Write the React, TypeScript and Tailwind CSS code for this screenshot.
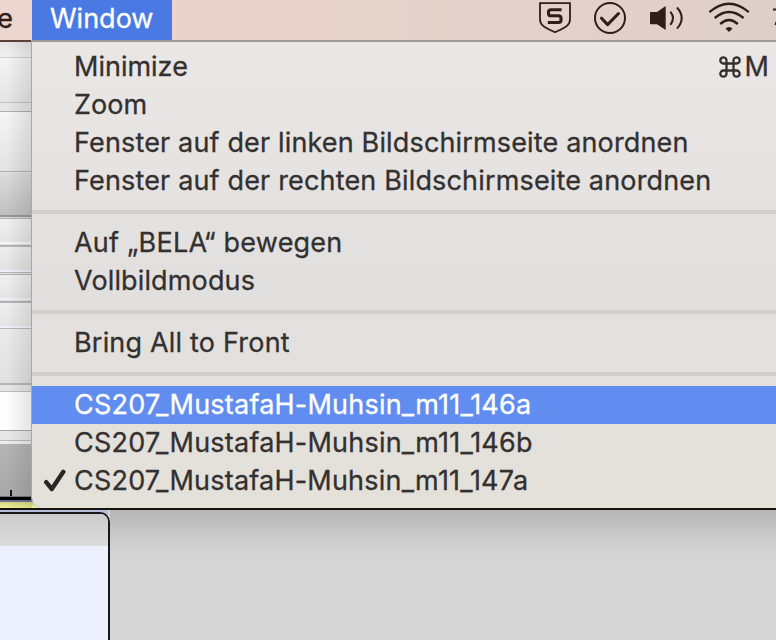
import React from "react";

const stripes: string[] = [
  "h-[15px] bg-linear-to-b from-[#e6e6e6] to-[#f1f1f1]",
  "h-px bg-[#cfcfcf]",
  "h-[44px] bg-linear-to-b from-[#f4f4f4] to-[#e4e4e4]",
  "h-px bg-[#c2c2c2]",
  "h-[8px] bg-[#e6e6e6]",
  "h-px bg-[#aeaeae]",
  "h-[59px] bg-linear-to-b from-[#f5f5f5] to-[#e2e2e2]",
  "h-px bg-[#aaaaaa]",
  "h-px bg-[#e6e6e6]",
  "h-[42px] bg-linear-to-b from-[#dcdcdc] to-[#c0c0c0]",
  "h-[2px] bg-[#969696]",
  "h-px bg-[#dddddd]",
  "h-px bg-[#b0b0b0]",
  "h-[23px] bg-linear-to-b from-[#f0f0f0] to-[#e5e5e5]",
  "h-[2px] bg-[#f8f8fa]",
  "h-px bg-[#dddddd]",
  "h-[2px] bg-[#b5b5b5]",
  "h-[23px] bg-linear-to-b from-[#ededed] to-[#e2e2e2]",
  "h-[2px] bg-[#f0f0fa]",
  "h-px bg-[#b4b4b4]",
  "h-px bg-[#e8e8e8]",
  "h-px bg-[#b0b0b0]",
  "h-[23px] bg-linear-to-b from-[#f0f0f0] to-[#e5e5e5]",
  "h-[2px] bg-[#f0f0fa]",
  "h-px bg-[#dddddd]",
  "h-[2px] bg-[#b5b5b5]",
  "h-[23px] bg-linear-to-b from-[#efefef] to-[#e5e5e5]",
  "h-[2px] bg-[#f0f0fa]",
  "h-px bg-[#b8b8b8]",
  "h-[54px] bg-linear-to-b from-[#ebebeb] to-[#e1e1e1]",
  "h-[2px] bg-[#b5b5b5]",
  "h-[6px] bg-[#e6e6e6]",
  "h-px bg-[#bdbdbd]",
  "h-[38px] bg-[#fdfdfd]",
  "h-px bg-[#a6a6a6]",
  "h-[9px] bg-[#e8e8e8]",
  "h-px bg-[#bbbbbb]",
  "h-[3px] bg-[#ededed]",
];

type Entry = { label: string; track: string; shortcut?: string; active?: boolean; checked?: boolean };

const groups: Entry[][] = [
  [
    { label: "Minimize", track: "tracking-[0px]", shortcut: "M" },
    { label: "Zoom", track: "tracking-[0.05px]" },
    { label: "Fenster auf der linken Bildschirmseite anordnen", track: "tracking-[0.15px]" },
    { label: "Fenster auf der rechten Bildschirmseite anordnen", track: "tracking-[0.16px]" },
  ],
  [
    { label: "Auf „BELA“ bewegen", track: "tracking-[0.21px]" },
    { label: "Vollbildmodus", track: "tracking-[0.14px]" },
  ],
  [{ label: "Bring All to Front", track: "tracking-[0.19px]" }],
  [
    { label: "CS207_MustafaH-Muhsin_m11_146a", track: "tracking-[0.22px]", active: true },
    { label: "CS207_MustafaH-Muhsin_m11_146b", track: "tracking-[0.22px]" },
    { label: "CS207_MustafaH-Muhsin_m11_147a", track: "tracking-[0.21px]", checked: true },
  ],
];

function CommandGlyph() {
  return (
    <svg className="mr-[4px] h-[22px] w-[22px]" viewBox="0 0 22 22" fill="none" stroke="currentColor" strokeWidth="2.3">
      <path d="M7.5 7.5V4.6A3.1 3.1 0 1 0 4.4 7.5H17.6A3.1 3.1 0 1 0 14.5 4.6V17.4A3.1 3.1 0 1 0 17.6 14.5H4.4A3.1 3.1 0 1 0 7.5 17.4Z" />
    </svg>
  );
}

function Row({ label, track, shortcut, active, checked }: Entry) {
  return (
    <div
      className={`flex h-[38px] items-center pr-[7px] pb-px [-webkit-text-stroke-width:0.3px] ${
        active ? "bg-[#618df0] text-white" : "text-[#33302f]"
      }`}
    >
      <div className="flex w-[42px] shrink-0 pl-[11px]">
        {checked && (
          <svg className="h-6 w-6" viewBox="0 0 24 24" fill="none" stroke="#292725" strokeWidth="4.4" strokeLinecap="round" strokeLinejoin="round">
            <path d="M3.2 13.2 L8.8 20 L20.3 2.8" />
          </svg>
        )}
      </div>
      <span className={`whitespace-pre ${track}`}>{label}</span>
      {shortcut && (
        <span className="ml-auto flex items-center">
          <CommandGlyph />
          {shortcut}
        </span>
      )}
    </div>
  );
}

function StatusIcons() {
  return (
    <svg className="h-10 w-[256px] shrink-0" viewBox="520 0 256 40" fill="none" stroke="#2e1d18" strokeWidth="2">
      <path d="M540 3.2H570V19.5C570 26.5 562 28.7 555 32.3C548 28.7 540 26.5 540 19.5Z" strokeWidth="1.8" />
      <path d="M561.6 9.8H551.2Q548.5 9.8 548.5 12.2V13.4Q548.5 15.8 551.2 15.8H558.3Q561 15.8 561 18.2V20.2Q561 22.5 558.3 22.5H547.8" strokeWidth="3.1" />
      <circle cx="610" cy="18" r="15" />
      <path d="M601.5 18.2L607.6 24.6L618.5 13.5" strokeWidth="3" strokeLinecap="round" strokeLinejoin="round" />
      <path d="M650 12.8Q650 12 651 12H657L665.7 6V30L657 24.2H651Q650 24.2 650 23.4Z" fill="#2e1d18" stroke="none" />
      <path d="M670.3 11.6Q675.7 18 670.3 24.8" />
      <path d="M677 7.5Q686.4 18 677 28.7" />
      <path d="M709.4 12.2Q729 -4.6 748.8 12.2" strokeWidth="2.4" />
      <path d="M714.7 18Q729 5.8 743.6 18" strokeWidth="2.4" />
      <path d="M720.2 24Q729 16.2 737.8 24" strokeWidth="2.4" />
      <path d="M725.5 28.6Q729 25.2 732.5 28.6L729 32Z" fill="#2e1d18" stroke="none" />
      <path d="M773 9.5H778M775.4 25L778 19" strokeWidth="2" />
    </svg>
  );
}

export default function App() {
  return (
    <div className="relative flex h-[640px] w-[776px] flex-col overflow-hidden bg-[#d5d5d5] font-['Inter',sans-serif] text-[27px] leading-[38px]">
      <header className="flex h-10 shrink-0 bg-linear-to-r from-[#ecd6ce] to-[#dfcfca] text-[#2e1d18] [-webkit-text-stroke-width:0.3px]">
        <div className="flex h-10 w-8 items-center justify-end overflow-hidden pr-[19px] pb-[3px]">e</div>
        <div className="flex h-10 w-[140px] items-center bg-[#4b79e4] pb-[3px] pl-[18px] text-white">
          <span className="tracking-[0px]">Window</span>
        </div>
        <div className="flex-1" />
        <StatusIcons />
      </header>
      <div className="h-[2px] shrink-0 bg-[#603f38]" />
      <div className="flex h-[402px] w-10 shrink-0 flex-col">
        {stripes.map((s, i) => (
          <div key={i} className={`shrink-0 ${s}`} />
        ))}
      </div>
      <div className="flex h-[52px] w-[50px] shrink-0 items-end bg-linear-to-b from-[#b4b4b4] to-[#a9a9a9] pl-[10px]">
        <div className="h-[6px] w-[2px] bg-[#111111]" />
      </div>
      <div className="h-px w-[50px] shrink-0 bg-[#777777]" />
      <div className="h-[3px] w-[50px] shrink-0 bg-black" />
      <div className="h-[2px] w-[50px] shrink-0 bg-[#707093]" />
      <div className="h-[6px] w-[50px] shrink-0 bg-linear-to-b from-[#d8d880] to-[#f0f098]" />
      <div className="h-[2px] shrink-0 bg-[#16130f]" />
      <div className="flex flex-1">
        <div className="flex w-[110px] flex-col bg-linear-to-r from-[#b5bcd8] from-98% to-[#d5d5d5] to-98% pt-[2px]">
          <div className="flex-1 overflow-hidden rounded-tr-[10px] border-t-2 border-r-2 border-[#16171c] bg-[#edf1ff]">
            <div className="h-[32px] bg-linear-to-b from-[#cbcbcb] to-[#dcdcdc]" />
          </div>
        </div>
        <div className="flex-1 bg-linear-to-b from-[#b6b6b6] via-[#cfcfcf] via-25% to-[#d6d6d6] to-40%" />
      </div>

      {/* Soft shade along the left edge of the open menu */}
      <div className="absolute top-[42px] left-0 h-[466px] w-8 bg-linear-to-r from-transparent from-20% to-black/10" />

      <div className="absolute top-[40px] left-[32px] flex h-[468px] w-[744px] flex-col rounded-bl-[10px] border-t-2 border-[#a09b99] bg-linear-to-b from-[#eae7e5] via-[#e2e0df] via-50% to-[#e4e1da] pt-[6px] shadow-[-1px_0_0_#a8a8a8]">
        {groups.map((group, g) => (
          <React.Fragment key={g}>
            {g > 0 && (
              <div className="flex h-6 items-center">
                <div className="h-1 w-full bg-[#d1cecd]" />
              </div>
            )}
            {group.map((item) => (
              <Row key={item.label} {...item} />
            ))}
          </React.Fragment>
        ))}
      </div>
    </div>
  );
}
